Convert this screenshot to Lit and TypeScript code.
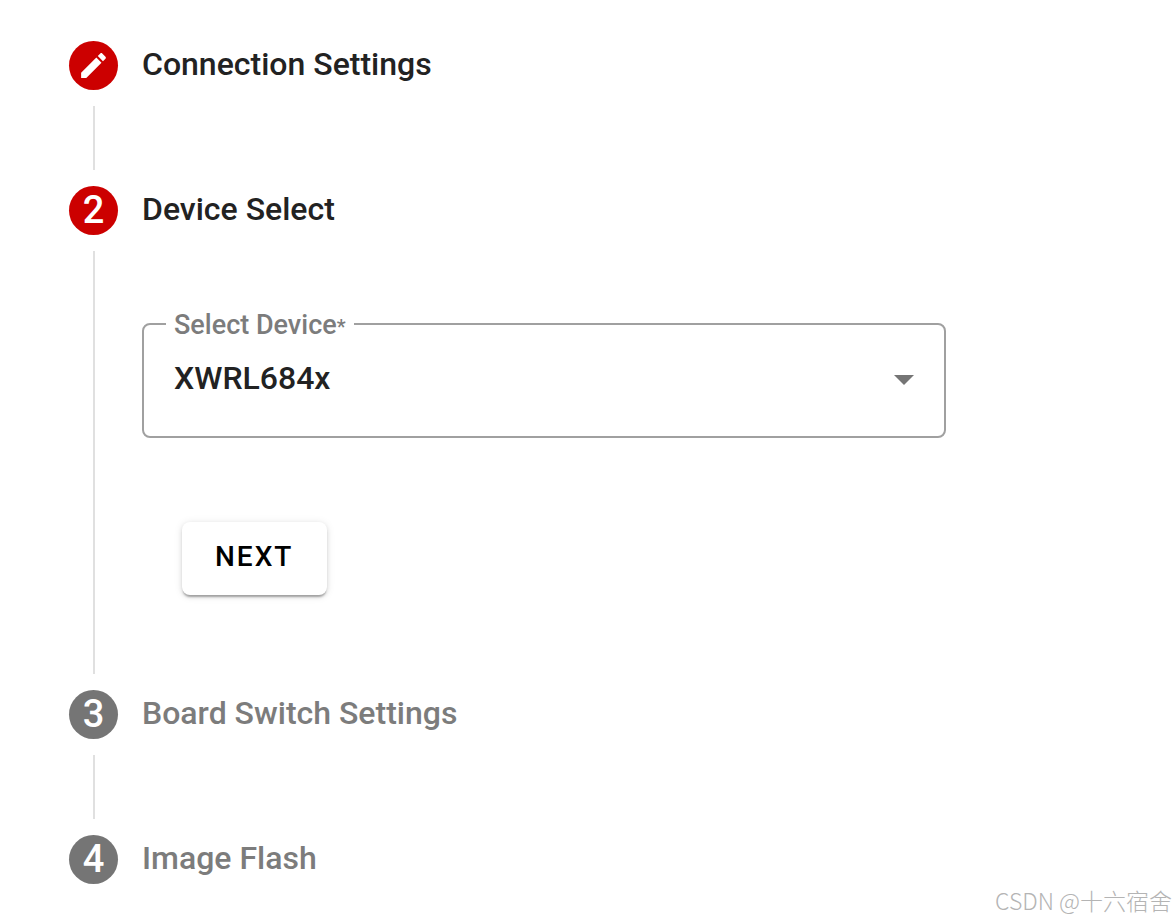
import { LitElement, html, css, nothing } from "lit";
import { customElement, property, state } from "lit/decorators.js";
import { classMap } from "lit/directives/class-map.js";

interface Step {
  label: string;
  status: "done" | "current" | "pending";
}

@customElement("step-badge")
class StepBadge extends LitElement {
  @property() status: Step["status"] = "pending";
  @property({ type: Number }) number = 1;

  static styles = css`
    :host {
      display: block;
    }
    .badge {
      display: flex;
      align-items: center;
      justify-content: center;
      width: 49px;
      height: 49px;
      border-radius: 50%;
      background: #757575;
      color: #fff;
      font: 500 38px/47px Roboto, sans-serif;
      padding-bottom: 1px;
      box-sizing: border-box;
    }
    .active {
      background: #c00;
    }
    .pencil {
      display: block;
      width: 33px;
      height: 33px;
      fill: currentColor;
    }
  `;

  render() {
    return html`<span class=${classMap({ badge: true, active: this.status !== "pending" })}>
      ${this.status === "done"
        ? html`<svg class="pencil" viewBox="0 0 24 24" aria-hidden="true">
            <path
              d="M3 17.25V21h3.75L17.81 9.94l-3.75-3.75L3 17.25zM20.71 7.04c.39-.39.39-1.02 0-1.41l-2.34-2.34c-.39-.39-1.02-.39-1.41 0l-1.83 1.83 3.75 3.75 1.83-1.83z"
            />
          </svg>`
        : this.number}
    </span>`;
  }
}

@customElement("device-form")
class DeviceForm extends LitElement {
  @state() private device = "XWRL684x";

  static styles = css`
    :host {
      display: block;
      font-family: Roboto, sans-serif;
    }
    .form {
      display: flex;
      flex-direction: column;
      align-items: flex-start;
      gap: 84px;
      padding: 72px 0 95px;
    }
    .field {
      width: 100%;
      max-width: 804px;
      box-sizing: border-box;
      margin: 0;
      padding: 0;
      border: 2px solid #a0a0a0;
      border-radius: 8px;
      min-width: 0;
    }
    .legend {
      margin-left: 22px;
      padding: 4px 8px 0;
      color: #7c7c7c;
      font-size: 27px;
      font-weight: 500;
      line-height: 28px;
    }
    .required {
      font-size: 20px;
    }
    .control {
      display: grid;
      align-items: center;
    }
    .select {
      grid-area: 1 / 1;
      appearance: none;
      width: 100%;
      border: 0;
      margin: 0;
      padding: 18px 72px 39px 30px;
      background: transparent;
      color: #222;
      font: 500 32px/38px Roboto, sans-serif;
    }
    .arrow {
      grid-area: 1 / 1;
      justify-self: end;
      width: 20px;
      height: 10px;
      margin: 0 30px 17px 0;
      fill: #757575;
      pointer-events: none;
    }
    .next {
      margin: 0 0 0 40px;
      padding: 0 34px 3px 33px;
      height: 73px;
      border: 0;
      border-radius: 8px;
      background: #fff;
      color: #000;
      font: 500 28px/70px Roboto, sans-serif;
      letter-spacing: 2px;
      box-shadow: 0 3px 2px -1px rgba(0, 0, 0, 0.28), 0 2px 4px rgba(0, 0, 0, 0.1),
        0 1px 8px rgba(0, 0, 0, 0.1);
    }
  `;

  private onChange(e: Event) {
    this.device = (e.target as HTMLSelectElement).value;
  }

  render() {
    return html`<form class="form" @submit=${(e: Event) => e.preventDefault()}>
      <fieldset class="field">
        <legend class="legend">
          <label for="device">Select Device<span class="required">*</span></label>
        </legend>
        <div class="control">
          <select class="select" id="device" required .value=${this.device} @change=${this.onChange}>
            <option value="XWRL684x">XWRL684x</option>
          </select>
          <svg class="arrow" viewBox="0 0 20 10" aria-hidden="true"><path d="M0 0h20L10 10z" /></svg>
        </div>
      </fieldset>
      <button class="next" type="submit">NEXT</button>
    </form>`;
  }
}

@customElement("app-root")
class AppRoot extends LitElement {
  private steps: Step[] = [
    { label: "Connection Settings", status: "done" },
    { label: "Device Select", status: "current" },
    { label: "Board Switch Settings", status: "pending" },
    { label: "Image Flash", status: "pending" },
  ];

  static styles = css`
    :host {
      display: block;
      position: relative;
      box-sizing: border-box;
      min-height: 100vh;
      background: #fff;
      font-family: Roboto, sans-serif;
    }
    .stepper {
      list-style: none;
      margin: 0;
      padding: 41px 69px 36px;
    }
    .step {
      display: grid;
      grid-template-columns: 49px minmax(0, 1fr);
      grid-template-rows: 49px auto;
      column-gap: 24px;
    }
    .label {
      margin: 0;
      color: #7c7c7c;
      font-size: 32px;
      font-weight: 500;
      line-height: 47px;
    }
    .reached {
      color: #222;
    }
    .line {
      justify-self: center;
      width: 2px;
      min-height: 64px;
      margin: 16px 0;
      background: #e0e0e0;
    }
    .watermark {
      position: absolute;
      right: 4px;
      bottom: 6px;
      color: #b4b4b4;
      font: 300 23px/30px "Noto Sans CJK SC", sans-serif;
    }
  `;

  render() {
    return html`
      <ol class="stepper">
        ${this.steps.map(
          (step, i) => html`<li class="step">
            <step-badge .status=${step.status} .number=${i + 1}></step-badge>
            <h2 class=${classMap({ label: true, reached: step.status !== "pending" })}>${step.label}</h2>
            ${i < this.steps.length - 1 ? html`<span class="line"></span>` : nothing}
            ${step.status === "current" ? html`<device-form></device-form>` : nothing}
          </li>`
        )}
      </ol>
      <span class="watermark">CSDN @十六宿舍</span>
    `;
  }
}
